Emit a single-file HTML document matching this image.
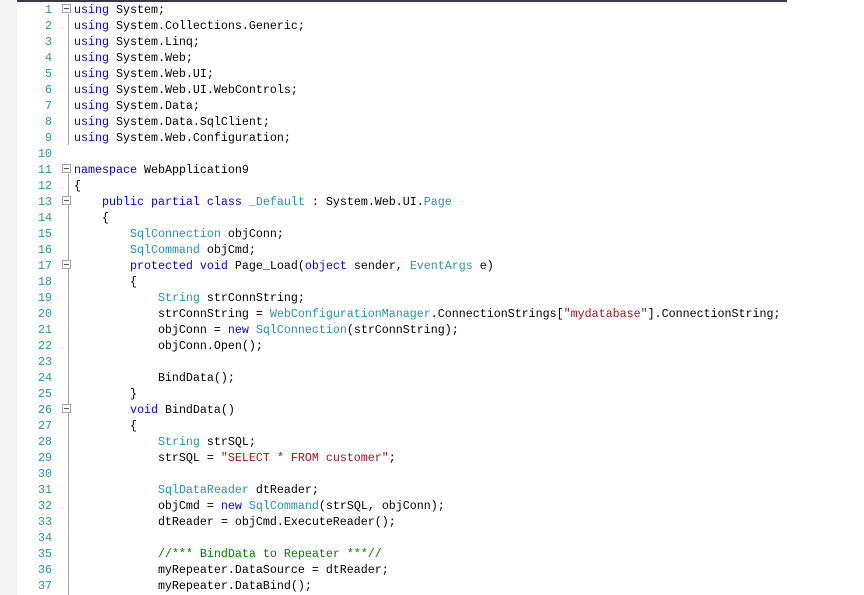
<!DOCTYPE html><html><head><style>
body{margin:0;width:864px;height:595px;background:#fff;overflow:hidden;position:relative;font-family:"Liberation Mono",monospace;font-size:11.67px}
.g{position:absolute;left:0;top:0;width:17px;height:595px;background:#f3f3f3}
.top{position:absolute;left:17px;top:0;width:770px;height:2px;background:#3a3a44}
.n{position:absolute;left:17px;width:35px;text-align:right;color:#2b91af;line-height:16px}
.c{position:absolute;left:74px;white-space:pre;line-height:16px;color:#000}
.k{color:#0000ff}.t{color:#2b91af}.s{color:#a31515}.m{color:#008000}
.v{position:absolute;left:68px;width:1px;background:#a5a5a5}
.b{position:absolute;left:62px;width:7px;height:7px;border:1px solid #a5a5a5;background:#fff}
.b:after{content:"";position:absolute;left:1px;top:3px;width:5px;height:1px;background:#555}
</style></head><body>
<div class="g"></div><div class="top"></div>
<div class="v" style="top:14px;height:131px"></div>
<div class="v" style="top:174px;height:421px"></div>
<div class="b" style="top:4px"></div>
<div class="b" style="top:164px"></div>
<div class="b" style="top:196px"></div>
<div class="b" style="top:260px"></div>
<div class="b" style="top:404px"></div>
<div id="L"></div>
<script>
var L=[
'<span class="k">using</span> System;',
'<span class="k">using</span> System.Collections.Generic;',
'<span class="k">using</span> System.Linq;',
'<span class="k">using</span> System.Web;',
'<span class="k">using</span> System.Web.UI;',
'<span class="k">using</span> System.Web.UI.WebControls;',
'<span class="k">using</span> System.Data;',
'<span class="k">using</span> System.Data.SqlClient;',
'<span class="k">using</span> System.Web.Configuration;',
'',
'<span class="k">namespace</span> WebApplication9',
'{',
'    <span class="k">public partial class</span> <span class="t">_Default</span> : System.Web.UI.<span class="t">Page</span>',
'    {',
'        <span class="t">SqlConnection</span> objConn;',
'        <span class="t">SqlCommand</span> objCmd;',
'        <span class="k">protected void</span> Page_Load(<span class="k">object</span> sender, <span class="t">EventArgs</span> e)',
'        {',
'            <span class="t">String</span> strConnString;',
'            strConnString = <span class="t">WebConfigurationManager</span>.ConnectionStrings[<span class="s">"mydatabase"</span>].ConnectionString;',
'            objConn = <span class="k">new</span> <span class="t">SqlConnection</span>(strConnString);',
'            objConn.Open();',
'',
'            BindData();',
'        }',
'        <span class="k">void</span> BindData()',
'        {',
'            <span class="t">String</span> strSQL;',
'            strSQL = <span class="s">"SELECT * FROM customer"</span>;',
'',
'            <span class="t">SqlDataReader</span> dtReader;',
'            objCmd = <span class="k">new</span> <span class="t">SqlCommand</span>(strSQL, objConn);',
'            dtReader = objCmd.ExecuteReader();',
'',
'            <span class="m">//*** BindData to Repeater ***//</span>',
'            myRepeater.DataSource = dtReader;',
'            myRepeater.DataBind();'];
var h='';for(var i=0;i<L.length;i++){var y=2+i*16;h+='<div class="n" style="top:'+y+'px">'+(i+1)+'</div><div class="c" style="top:'+y+'px">'+L[i]+'</div>';}
document.getElementById('L').innerHTML=h;
</script>
</body></html>
